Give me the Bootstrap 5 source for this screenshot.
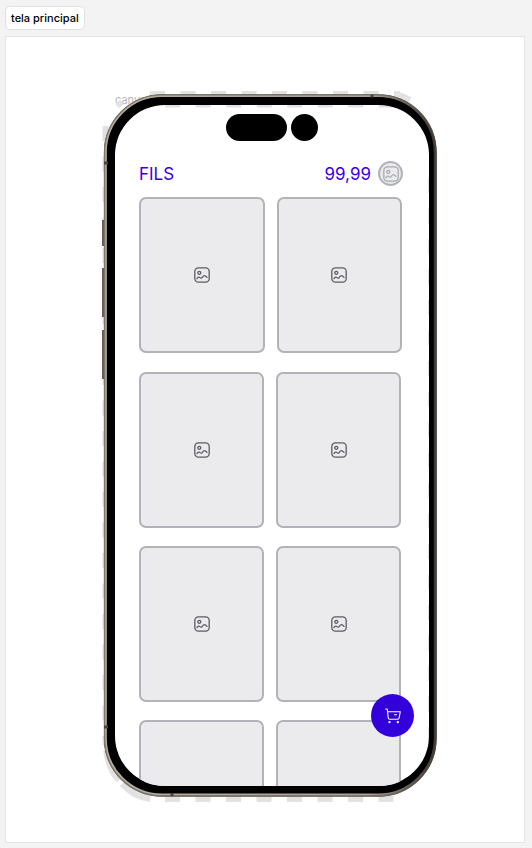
<!DOCTYPE html>
<html lang="pt-BR">
<head>
<meta charset="utf-8">
<meta name="viewport" content="width=device-width, initial-scale=1">
<title>tela principal</title>
<link href="https://cdn.jsdelivr.net/npm/bootstrap@5.3.0/dist/css/bootstrap.min.css" rel="stylesheet">
<style>
  body { background: #f3f3f3; font-family: Inter, "Liberation Sans", sans-serif; }
  .page { padding: 6px 7px 5px 5px; }
  .frame-title { font-size: 11px; line-height: 16px; font-weight: 500; padding: 3px 5px; color: #000; border: 1px solid #e0e0e0; border-radius: 5px; }
  .board { margin-top: 6px; padding: 54px 0 40px 10px; border: 1px solid #e4e4e4; }
  .phone { width: 336px; padding: 14px 9px 16px 13px; }
  .art { inset: 0; pointer-events: none; }
  .canvas-label { left: 13px; top: 1px; font-size: 11px; line-height: 16px; color: #b8b8b8; }
  .screen { height: 681px; border-radius: 50px; }
  .island { gap: 4px; padding-top: 9px; }
  .pill, .lens { height: 27px; background: #000; }
  .pill { width: 61px; }
  .lens { width: 27px; }
  .topbar { padding: 20px 26px 0 24px; font-size: 17px; line-height: 24px; color: #3a00e5; }
  .avatar { width: 25px; height: 25px; margin-left: 7px; background: #ebebed; border: 2px solid #b1b3b8; color: #a9abb0; }
  .tiles { display: grid; grid-template-columns: 1fr 1fr; gap: 18px 12px; padding: 19px 28px 0 24px; }
  .tiles-first { padding: 11px 27px 0 24px; }
  .tile { height: 156px; background: #ebebed; border: 2px solid #b1b3b8; border-radius: 7px; color: #5b5d63; }
  .cart { right: 15px; bottom: 49px; width: 43px; height: 43px; background: #3300dc; color: #fff; }
</style>
<script src="https://cdn.jsdelivr.net/npm/bootstrap@5.3.0/dist/js/bootstrap.bundle.min.js"></script>
</head>
<body>
<svg class="d-none" aria-hidden="true">
  <symbol id="picture" viewBox="0 0 16 16">
    <g fill="none" stroke="currentColor" stroke-width="1.3" stroke-linecap="round" stroke-linejoin="round">
      <rect x=".8" y=".8" width="14.4" height="14.4" rx="3.6"/>
      <circle cx="5.3" cy="5.8" r="1.5"/>
      <path d="M3 11.5C4.300 9.800 5.300 9.900 6 10.600S7.400 11.600 8.300 10.300C9.800 8 11 7.900 13 10.400"/>
    </g>
  </symbol>
</svg>

<main class="page">
  <h1 class="frame-title d-inline-block bg-white m-0 align-top">tela principal</h1>

  <section class="board bg-white">
    <div class="phone position-relative mx-auto">
      <span class="canvas-label position-absolute">canvas</span>

      <svg class="art position-absolute w-100 h-100" viewBox="102 91 336 711" aria-hidden="true">
        <defs>
          <linearGradient id="metal" x1="0" y1="0" x2="1" y2="0">
            <stop offset="0" stop-color="#b5ada4"/><stop offset=".8" stop-color="#aaa297"/><stop offset=".93" stop-color="#625b52"/><stop offset="1" stop-color="#3c3832"/>
          </linearGradient>
          <linearGradient id="rim" x1="0" y1="0" x2="1" y2="0">
            <stop offset="0" stop-color="#7d756b"/><stop offset=".8" stop-color="#7d756b"/><stop offset="1" stop-color="#4d4740"/>
          </linearGradient>
        </defs>
        <g fill="none" stroke="#e2e2e2" stroke-width="6">
          <path d="M150 94H400M165.200 104.500H395" stroke-dasharray="15 15.500"/>
          <path d="M165 799H400" stroke-dasharray="15 15.500"/>
          <path d="M105.500 126V745M431 178V750" stroke-dasharray="15 15.500"/>
          <path d="M106 750Q109 771 119 780M122 784Q134 797 150 799"/>
          <path d="M394 94Q403 96 410 100M117 106L122 102"/>
        </g>
        <path d="M103 220v26M103 268v49M103 330v49" stroke="#655d53" stroke-width="2"/>
        <path fill="#000" fill-rule="evenodd" d="M162 94.500H378.500A58 58 0 0 1 436.500 152.500V738.500A58 58 0 0 1 378.500 796.500H162A58 58 0 0 1 104 738.500V152.500A58 58 0 0 1 162 94.500ZM165 105A50 50 0 0 0 115 155V736A50 50 0 0 0 165 786H379A50 50 0 0 0 429 736V155A50 50 0 0 0 379 105Z"/>
        <g fill="none">
          <rect x="105" y="95.500" width="330.500" height="700" rx="57" stroke="url(#rim)" stroke-width="2.400"/>
          <rect x="106" y="96.300" width="328.500" height="698" rx="56" stroke="url(#metal)" stroke-width="1.600"/>
        </g>
        <path d="M104 163h4M104 727h4M372 94.500v3M172 793v3" stroke="#49433d" stroke-width="3"/>
      </svg>

      <div class="screen position-relative overflow-hidden">
        <div class="island d-flex justify-content-center">
          <span class="pill rounded-pill"></span>
          <span class="lens rounded-circle"></span>
        </div>

        <header class="topbar d-flex align-items-center">
          <span class="me-auto">FILS</span>
          <span>99,99</span>
          <span class="avatar rounded-circle d-flex align-items-center justify-content-center"><svg class="flex-shrink-0" width="16" height="16" role="img" aria-label="Avatar"><use href="#picture"/></svg></span>
        </header>

        <div class="tiles tiles-first">
          <div class="tile d-flex align-items-center justify-content-center"><svg width="16" height="16"><use href="#picture"/></svg></div>
          <div class="tile d-flex align-items-center justify-content-center"><svg width="16" height="16"><use href="#picture"/></svg></div>
        </div>
        <div class="tiles">
          <div class="tile d-flex align-items-center justify-content-center"><svg width="16" height="16"><use href="#picture"/></svg></div>
          <div class="tile d-flex align-items-center justify-content-center"><svg width="16" height="16"><use href="#picture"/></svg></div>
          <div class="tile d-flex align-items-center justify-content-center"><svg width="16" height="16"><use href="#picture"/></svg></div>
          <div class="tile d-flex align-items-center justify-content-center"><svg width="16" height="16"><use href="#picture"/></svg></div>
          <div class="tile"></div>
          <div class="tile"></div>
        </div>

        <button type="button" class="cart btn position-absolute rounded-circle border-0 p-0 d-flex align-items-center justify-content-center" aria-label="Carrinho">
          <svg width="16" height="16" viewBox="0 0 16 16" fill="none" stroke="currentColor" stroke-width="1.100" stroke-linecap="round" stroke-linejoin="round">
            <path d="M.7 1H2.300L3.200 9.700Q3.400 11.200 4.800 11.200H12.800Q13.900 11.200 14.100 10L15.300 3.700H2.700M9.500 6.700H11.500"/>
            <circle cx="4.500" cy="14.200" r=".6" fill="currentColor"/><circle cx="12.800" cy="14.200" r=".6" fill="currentColor"/>
          </svg>
        </button>
      </div>
    </div>
  </section>
</main>
</body>
</html>
